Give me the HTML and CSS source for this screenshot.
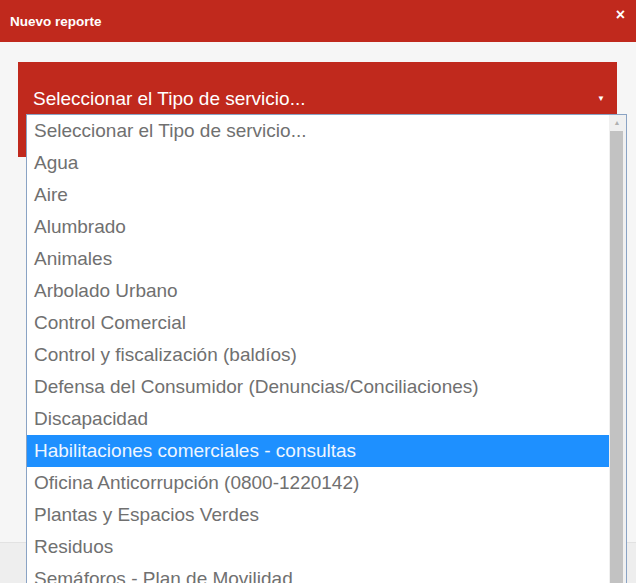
FILE: index.html
```html
<!DOCTYPE html>
<html lang="es">
<head>
    <meta charset="UTF-8">
    <meta name="viewport" content="width=device-width, initial-scale=1.0">
    <title>Nuevo reporte</title>
    <link rel="stylesheet" href="styles.css">
</head>
<body>
    <div class="modal">
        <div class="modal-header">
            <span class="modal-title">Nuevo reporte</span>
            <span class="close">&times;</span>
        </div>
        <div class="modal-body">
            <div class="select-box">
                <span>Seleccionar el Tipo de servicio...</span>
                <span class="caret">&#9660;</span>
            </div>
        </div>
        <div class="modal-footer"></div>

        <div class="dropdown">
            <ul class="options">
                <li>Seleccionar el Tipo de servicio...</li>
                <li>Agua</li>
                <li>Aire</li>
                <li>Alumbrado</li>
                <li>Animales</li>
                <li>Arbolado Urbano</li>
                <li>Control Comercial</li>
                <li>Control y fiscalización (baldíos)</li>
                <li>Defensa del Consumidor (Denuncias/Conciliaciones)</li>
                <li>Discapacidad</li>
                <li class="selected">Habilitaciones comerciales - consultas</li>
                <li>Oficina Anticorrupción (0800-1220142)</li>
                <li>Plantas y Espacios Verdes</li>
                <li>Residuos</li>
                <li>Semáforos - Plan de Movilidad</li>
            </ul>
            <div class="scrollbar">
                <div class="scroll-up">&#9650;</div>
                <div class="scroll-thumb"></div>
            </div>
        </div>
    </div>
</body>
</html>
```

FILE: styles.css
```css
* {
    margin: 0;
    padding: 0;
    box-sizing: border-box;
}

body {
    background-color: #f6f6f6;
    font-family: 'Liberation Sans', Arial, sans-serif;
    height: 583px;
    overflow: hidden;
}

.modal {
    position: relative;
    height: 583px;
    display: flex;
    flex-direction: column;
}

.modal-header {
    background-color: #c0291d;
    color: white;
    height: 42px;
    display: flex;
    align-items: center;
    justify-content: space-between;
    padding: 0 10px 0 10px;
}

.modal-title {
    font-size: 13.5px;
    font-weight: bold;
}

.close {
    font-size: 16px;
    font-weight: bold;
    margin-top: -12px;
    margin-right: 1px;
}

.modal-body {
    padding: 20px 19px 0 18px;
    height: 501px;
    border-bottom: 1px solid #e2e2e2;
}

.select-box {
    background-color: #c0291d;
    color: white;
    height: 95px;
    display: flex;
    align-items: center;
    justify-content: space-between;
    padding: 0 12px 22px 15px;
    font-size: 19px;
}

.caret {
    font-size: 8px;
}

.modal-footer {
    flex: 1;
    background-color: #eeeeee;
}

.dropdown {
    position: absolute;
    left: 26px;
    top: 114px;
    width: 601px;
    height: 480px;
    background-color: white;
    border: 1px solid #8aa3c4;
    display: flex;
}

.options {
    list-style: none;
    flex: 1;
}

.options li {
    height: 32px;
    line-height: 32px;
    padding-left: 7px;
    font-size: 19px;
    color: #707070;
    white-space: nowrap;
}

.options li.selected {
    background-color: #1e90ff;
    color: #eef6ff;
}

.scrollbar {
    width: 17px;
    background-color: #f0f0f0;
    display: flex;
    flex-direction: column;
    align-items: flex-start;
    padding-left: 1px;
}

.scroll-up {
    height: 16px;
    width: 14px;
    font-size: 7px;
    color: #b0b0b0;
    text-align: center;
    line-height: 16px;
}

.scroll-thumb {
    flex: 1;
    width: 13px;
    background-color: #c2c2c2;
}
```
